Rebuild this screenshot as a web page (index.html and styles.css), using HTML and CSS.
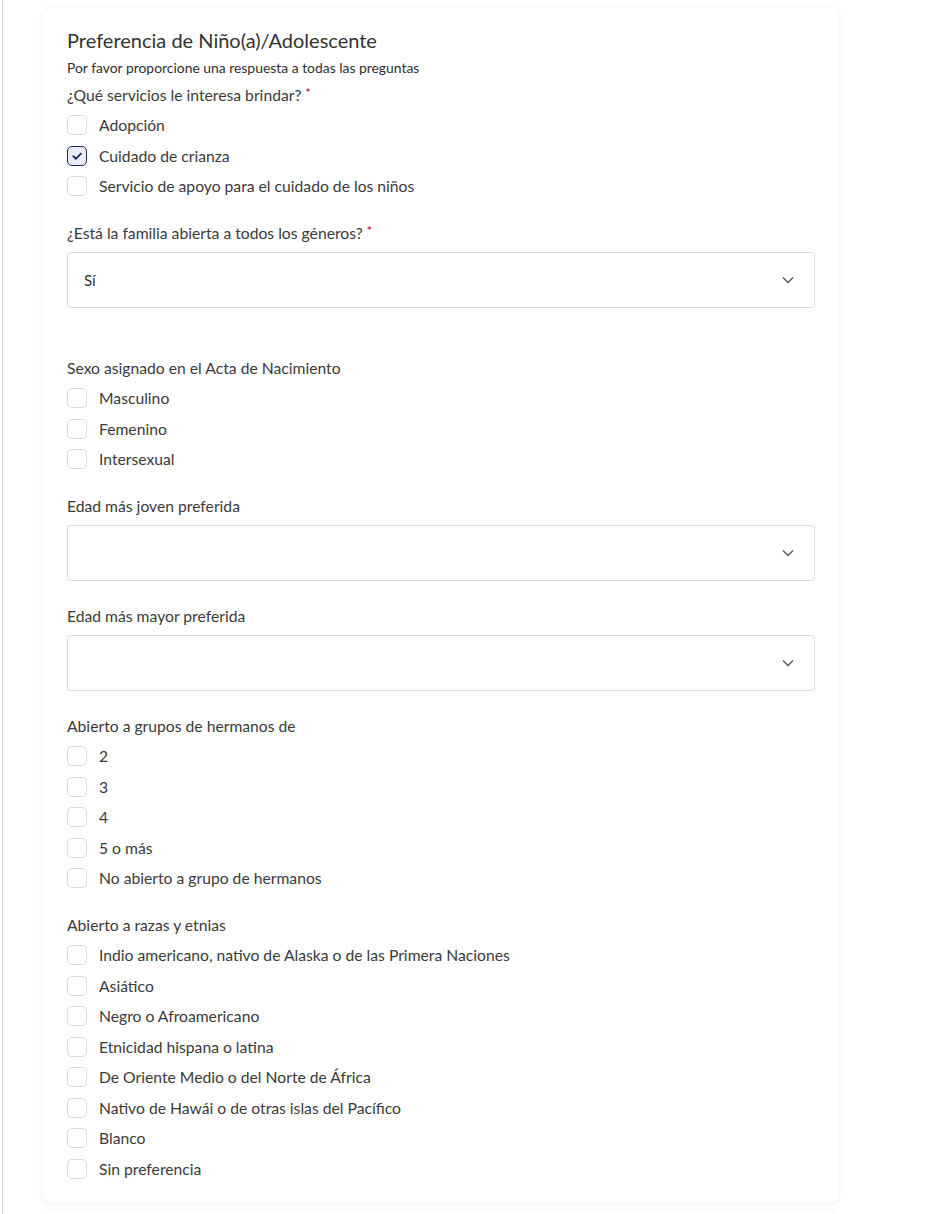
FILE: index.html
```html
<!DOCTYPE html>
<html lang="es">
<head>
  <meta charset="UTF-8" />
  <meta name="viewport" content="width=device-width, initial-scale=1.0" />
  <title>Preferencia de Niño(a)/Adolescente</title>
  <link rel="stylesheet" href="styles.css">
</head>
<body>
  <div class="page">
    <span class="rail-tick"></span>
    <div class="content">

      <!-- Child preference card -->
      <section class="card">
        <h2 class="card-title">Preferencia de Niño(a)/Adolescente</h2>
        <p class="card-subtitle">Por favor proporcione una respuesta a todas las preguntas</p>

        <div class="fields">
          <div class="field">
            <div class="field-label">¿Qué servicios le interesa brindar? <span class="required">*</span></div>
            <div class="options">
              <label class="option"><span class="box"></span>Adopción</label>
              <label class="option"><span class="box checked">
                <svg viewBox="0 0 20 20" width="20" height="20"><path d="M5.8 10.2l2.9 2.9L14.4 7.3" fill="none" stroke="#1b2656" stroke-width="2" stroke-linecap="round" stroke-linejoin="round"/></svg>
              </span>Cuidado de crianza</label>
              <label class="option"><span class="box"></span>Servicio de apoyo para el cuidado de los niños</label>
            </div>
          </div>

          <div class="field">
            <div class="field-label field-label-select">¿Está la familia abierta a todos los géneros? <span class="required">*</span></div>
            <div class="select">
              <span class="select-value">Sí</span>
              <svg class="chevron" viewBox="0 0 12 8" width="12" height="8"><path d="M1 1.5l5 5 5-5" fill="none" stroke="#555" stroke-width="1.3"/></svg>
            </div>
          </div>

          <div class="field-slot"></div>

          <div class="field">
            <div class="field-label">Sexo asignado en el Acta de Nacimiento</div>
            <div class="options">
              <label class="option"><span class="box"></span>Masculino</label>
              <label class="option"><span class="box"></span>Femenino</label>
              <label class="option"><span class="box"></span>Intersexual</label>
            </div>
          </div>

          <div class="field">
            <div class="field-label field-label-select">Edad más joven preferida</div>
            <div class="select">
              <span class="select-value"></span>
              <svg class="chevron" viewBox="0 0 12 8" width="12" height="8"><path d="M1 1.5l5 5 5-5" fill="none" stroke="#555" stroke-width="1.3"/></svg>
            </div>
          </div>

          <div class="field">
            <div class="field-label field-label-select">Edad más mayor preferida</div>
            <div class="select">
              <span class="select-value"></span>
              <svg class="chevron" viewBox="0 0 12 8" width="12" height="8"><path d="M1 1.5l5 5 5-5" fill="none" stroke="#555" stroke-width="1.3"/></svg>
            </div>
          </div>

          <div class="field">
            <div class="field-label">Abierto a grupos de hermanos de</div>
            <div class="options">
              <label class="option"><span class="box"></span>2</label>
              <label class="option"><span class="box"></span>3</label>
              <label class="option"><span class="box"></span>4</label>
              <label class="option"><span class="box"></span>5 o más</label>
              <label class="option"><span class="box"></span>No abierto a grupo de hermanos</label>
            </div>
          </div>

          <div class="field">
            <div class="field-label">Abierto a razas y etnias</div>
            <div class="options">
              <label class="option"><span class="box"></span>Indio americano, nativo de Alaska o de las Primera Naciones</label>
              <label class="option"><span class="box"></span>Asiático</label>
              <label class="option"><span class="box"></span>Negro o Afroamericano</label>
              <label class="option"><span class="box"></span>Etnicidad hispana o latina</label>
              <label class="option"><span class="box"></span>De Oriente Medio o del Norte de África</label>
              <label class="option"><span class="box"></span>Nativo de Hawái o de otras islas del Pacífico</label>
              <label class="option"><span class="box"></span>Blanco</label>
              <label class="option"><span class="box"></span>Sin preferencia</label>
            </div>
          </div>
        </div>
      </section>

      <!-- next section card -->
      <section class="card card-next"></section>
    </div>
  </div>
</body>
</html>
```

FILE: styles.css
```css
/* Base */
* {
  margin: 0;
  padding: 0;
  box-sizing: border-box;
}

body {
  font-family: Lato, 'Open Sans', sans-serif;
  color: #3a3a3a;
  background-color: #ffffff;
}

/* Page wrapper with the thin rail on the left */
.page {
  position: relative;
  margin-left: 2px;
  border-left: 1px solid #d3d3d3;
  height: 100vh;
  overflow: hidden;
}

.rail-tick {
  position: absolute;
  left: -3px;
  top: 201px;
  width: 3px;
  height: 1px;
  background-color: #c8c8c8;
}

.content {
  padding: 8px 0 0 40px;
  width: 835px;
}

/* Card */
.card {
  background-color: #ffffff;
  border-radius: 8px;
  box-shadow: 0 1px 6px rgba(0, 0, 0, 0.08);
  padding: 20px 23px 22px 24px;
}

.card-next {
  margin-top: 9px;
  height: 80px;
}

.card-title {
  font-size: 20px;
  font-weight: 400;
  line-height: 24px;
  color: #333333;
  margin-bottom: 8px;
}

.card-subtitle {
  font-size: 13.9px;
  line-height: 16px;
  color: #2f2f2f;
  margin-bottom: 7px;
}

/* Fields */
.fields {
  display: flex;
  flex-direction: column;
  gap: 23px;
}

.field-slot {
  height: 2px;
}

.field-label {
  font-size: 15.7px;
  line-height: 24px;
  color: #3a3a3a;
  margin-bottom: 6px;
}

.field-label-select {
  margin-bottom: 7px;
}

.required {
  color: #c81a55;
  font-size: 12px;
  font-weight: 700;
  vertical-align: top;
  line-height: 20px;
}

/* Checkbox lists */
.options {
  display: flex;
  flex-direction: column;
  gap: 6.5px;
}

.option {
  display: flex;
  align-items: center;
  gap: 12px;
  height: 24px;
  font-size: 15.7px;
  color: #3a3a3a;
}

.box {
  width: 20px;
  height: 20px;
  flex-shrink: 0;
  border: 1px solid #dadada;
  border-radius: 5px;
  background-color: #ffffff;
  display: flex;
  align-items: center;
  justify-content: center;
}

.box.checked {
  border: 1.5px solid #1b2656;
  background-color: #e8edf9;
}

.box.checked svg {
  width: 18px;
  height: 18px;
}

/* Select boxes */
.select {
  display: flex;
  align-items: center;
  justify-content: space-between;
  height: 56px;
  border: 1px solid #dcdcdc;
  border-radius: 4px;
  padding: 0 20px 0 16px;
  font-size: 15px;
  color: #333333;
}

.chevron {
  display: block;
}
```
